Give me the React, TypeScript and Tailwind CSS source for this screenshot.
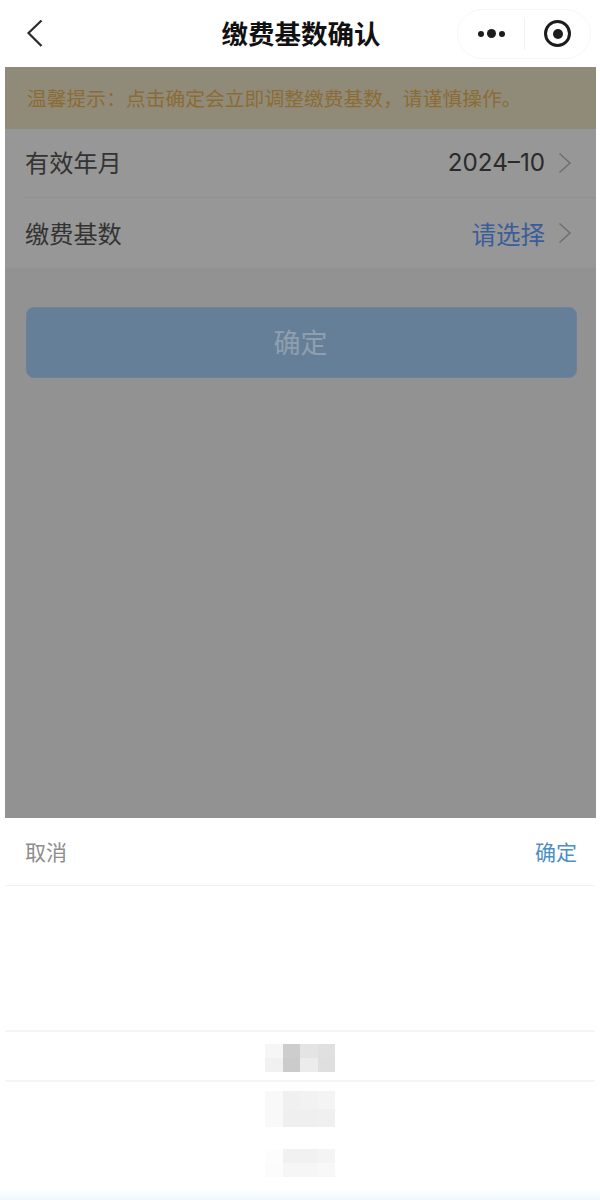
import React from "react";

const cjk = { fontFamily: '"Noto Sans CJK SC", "Liberation Sans", sans-serif' };

function Chevron() {
  return (
    <svg width="16" height="26" viewBox="0 0 16 26" fill="none" className="ml-[12px] shrink-0">
      <path d="M2.5 3.5 L13 13 L2.5 22.5" stroke="#6f6f6f" strokeWidth="1.5" />
    </svg>
  );
}

function Mosaic({ cells, h }: { cells: string[]; h: string }) {
  return (
    <div className={`grid grid-cols-4 grid-rows-2 w-[70px] ${h}`}>
      {cells.map((c, i) => (
        <div key={i} style={{ backgroundColor: c }} />
      ))}
    </div>
  );
}

export default function App() {
  return (
    <div className="w-[600px] h-[1200px] bg-white flex flex-col overflow-hidden" style={cjk}>
      {/* nav bar */}
      <div className="h-[67px] shrink-0 flex items-center justify-between pl-[25px] pr-[9px] relative">
        <svg width="20" height="30" viewBox="0 0 20 30" fill="none" className="mb-[2px]">
          <path d="M16.5 2.5 L3.5 15 L16.5 28" stroke="#2a2a2a" strokeWidth="2.2" />
        </svg>
        <div className="absolute left-0 right-0 top-[13px] text-center text-[26.5px] leading-[40px] font-bold text-[#111111] pl-[2px]">
          缴费基数确认
        </div>
        <div className="w-[134px] h-[50px] rounded-full border border-[#f7f7f7] flex items-center">
          <div className="w-[66px] flex items-center justify-center gap-[3px]">
            <span className="w-[6px] h-[6px] rounded-full bg-[#1c1c1c]" />
            <span className="w-[9px] h-[9px] rounded-full bg-[#1c1c1c]" />
            <span className="w-[6px] h-[6px] rounded-full bg-[#1c1c1c]" />
          </div>
          <div className="w-px h-[32px] bg-[#f1f1f1]" />
          <div className="flex-1 flex items-center justify-center">
            <div className="w-[27px] h-[27px] rounded-full border-[3px] border-[#1c1c1c] flex items-center justify-center">
              <div className="w-[10px] h-[10px] rounded-full bg-[#1c1c1c]" />
            </div>
          </div>
        </div>
      </div>

      {/* dimmed page */}
      <div className="mx-[5px] w-[591px] h-[751px] shrink-0 bg-[#929292] flex flex-col">
        <div className="h-[62px] bg-[#8f8b78] pl-[22px] flex items-center text-[19.8px] text-[#8c6c34]">
          温馨提示：点击确定会立即调整缴费基数，请谨慎操作。
        </div>
        <div className="bg-[#979797]">
          <div className="h-[69px] ml-[20px] pr-[23px] flex items-center justify-between border-b border-[#909090]">
            <span className="text-[24.2px] text-[#333333] mb-[2px]">有效年月</span>
            <span className="flex items-center">
              <span className="text-[24.2px] text-[#2a2a2a]" style={{ fontFamily: '"Inter", "Liberation Sans", sans-serif' }}>
                2024–10
              </span>
              <Chevron />
            </span>
          </div>
          <div className="h-[70px] ml-[20px] pr-[23px] flex items-center justify-between">
            <span className="text-[24.2px] text-[#333333]">缴费基数</span>
            <span className="flex items-center">
              <span className="text-[24.5px] text-[#3a5d9a] mt-[2px]">请选择</span>
              <Chevron />
            </span>
          </div>
        </div>
        <div className="mt-[39px] ml-[21px] w-[551px] h-[71px] rounded-[8px] bg-[#667f98] border border-[#6a829b] flex items-center justify-center text-[27px] text-[#8f9faf] pb-[1px] pr-[2px]">
          确定
        </div>
      </div>

      {/* picker sheet */}
      <div className="flex-1 flex flex-col bg-gradient-to-b from-white from-[97%] to-[#eff9fd]">
        <div className="h-[68px] mx-[5px] shrink-0 pl-[20px] pr-[18px] flex items-center justify-between border-b border-[#f1f1f1] text-[21px]">
          <span className="text-[#8d8d8d]">取消</span>
          <span className="text-[#4d8fc4]">确定</span>
        </div>
        <div className="h-[144px] shrink-0" />
        <div className="h-[52px] mx-[5px] shrink-0 border-y-2 border-[#f5f5f5] flex items-center justify-center">
          <div className="mt-[3px]">
            <Mosaic h="h-[28px]" cells={["#f6f6f6", "#cdcdcd", "#e4e4e4", "#e0e0e0", "#f1f1f1", "#cbcbcb", "#ececec", "#dfdfdf"]} />
          </div>
        </div>
        <div className="flex-1 flex flex-col items-center pt-[9px] gap-[22px]">
          <Mosaic h="h-[36px]" cells={["#f9f9f9", "#f0f0f0", "#f2f2f2", "#f4f4f4", "#f9f9f9", "#efefef", "#efefef", "#f0f0f0"]} />
          <Mosaic h="h-[28px]" cells={["#fdfdfd", "#f1f1f1", "#f1f1f1", "#f4f4f4", "#fcfcfc", "#f6f6f6", "#f6f6f6", "#f8f8f8"]} />
        </div>
      </div>
    </div>
  );
}
